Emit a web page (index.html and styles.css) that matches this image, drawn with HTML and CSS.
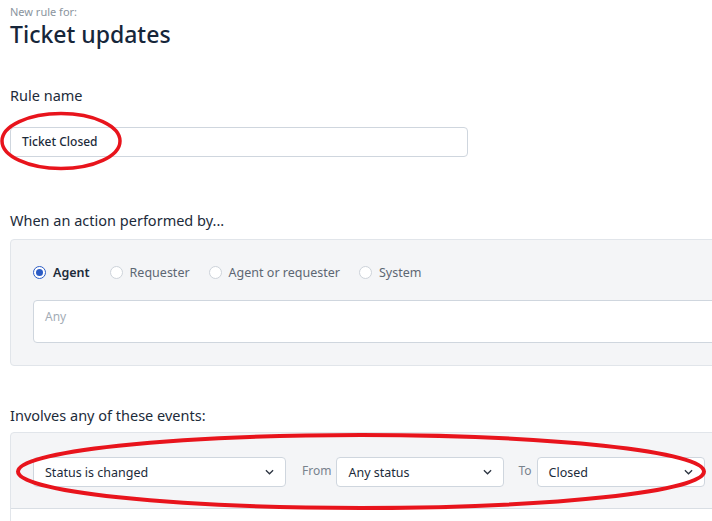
FILE: index.html
```html
<!DOCTYPE html>
<html lang="en">
<head>
<meta charset="utf-8">
<title>New rule</title>
<link rel="stylesheet" href="styles.css">
</head>
<body>
<div class="page">
  <div class="eyebrow">New rule for:</div>
  <h1 class="title">Ticket updates</h1>

  <div class="field-label first">Rule name</div>
  <div class="text-input">Ticket Closed</div>

  <div class="field-label section">When an action performed by...</div>
  <div class="panel panel-actor">
    <div class="radios">
      <label class="radio checked"><span class="dot"></span><span class="rtext">Agent</span></label>
      <label class="radio"><span class="dot"></span><span class="rtext">Requester</span></label>
      <label class="radio"><span class="dot"></span><span class="rtext">Agent or requester</span></label>
      <label class="radio"><span class="dot"></span><span class="rtext">System</span></label>
    </div>
    <div class="any-input">Any</div>
  </div>

  <div class="field-label section2">Involves any of these events:</div>
  <div class="panel panel-events">
    <div class="event-row">
      <div class="select s1"><span>Status is changed</span><svg class="chev" viewBox="0 0 10 6" width="9" height="6"><path d="M1 1l4 4 4-4" fill="none" stroke="#2b3340" stroke-width="1.4"/></svg></div>
      <span class="inline-label from">From</span>
      <div class="select s2"><span>Any status</span><svg class="chev" viewBox="0 0 10 6" width="9" height="6"><path d="M1 1l4 4 4-4" fill="none" stroke="#2b3340" stroke-width="1.4"/></svg></div>
      <span class="inline-label to">To</span>
      <div class="select s3"><span>Closed</span><svg class="chev" viewBox="0 0 10 6" width="9" height="6"><path d="M1 1l4 4 4-4" fill="none" stroke="#2b3340" stroke-width="1.4"/></svg></div>
    </div>
    <div class="panel-foot"></div>
  </div>
</div>

<svg class="annotations" width="712" height="521" viewBox="0 0 712 521">
  <ellipse cx="61" cy="141" rx="59" ry="27.5" fill="none" stroke="#e8141c" stroke-width="3.5"/>
  <ellipse cx="361" cy="471.5" rx="343" ry="36.5" fill="none" stroke="#e8141c" stroke-width="4"/>
</svg>
</body>
</html>
```

FILE: styles.css
```css
html, body {
  margin: 0;
  padding: 0;
  background: #ffffff;
  overflow: hidden;
}

body {
  width: 712px;
  height: 521px;
  position: relative;
  font-family: "Noto Sans", "Open Sans", "DejaVu Sans", sans-serif;
  color: #1c2b3a;
}

.page {
  padding-left: 10px;
  width: 702px;
  overflow: hidden;
}

.eyebrow {
  font-size: 11px;
  line-height: 14px;
  color: #8a949e;
  padding-top: 5px;
}

.title {
  margin: 0;
  font-size: 23px;
  font-weight: 500;
  line-height: 30px;
  color: #16263a;
}

.field-label {
  font-size: 14.5px;
  line-height: 20px;
  font-weight: 400;
  color: #1c2b3a;
}

.field-label.first {
  margin-top: 36px;
}

.text-input {
  margin-top: 22px;
  height: 28px;
  border: 1px solid #cfd6de;
  border-radius: 4px;
  box-sizing: content-box;
  font-size: 12px;
  font-weight: 500;
  line-height: 28px;
  padding-left: 11px;
  width: 445px;
  color: #1c2b3a;
}

.field-label.section {
  margin-top: 53px;
}

.panel {
  background: #f4f5f7;
  border: 1px solid #e1e5ea;
  border-radius: 4px;
  width: 740px;
  box-sizing: border-box;
}

.panel-actor {
  margin-top: 9px;
  padding: 23px 0 22px 22px;
}

.radios {
  display: flex;
  align-items: center;
  height: 18px;
}

.radio {
  display: flex;
  align-items: center;
  margin-right: 19px;
  font-size: 12.5px;
  color: #5d6773;
}

.radio .dot {
  width: 11px;
  height: 11px;
  border-radius: 50%;
  border: 1px solid #cdd3da;
  background: #ffffff;
  margin-right: 7px;
  position: relative;
  box-sizing: content-box;
}

.radio.checked {
  color: #1c2b3a;
  font-weight: 600;
  margin-right: 20px;
}

.radio.checked .dot {
  border-color: #2c5cc5;
}

.radio.checked .dot::after {
  content: "";
  position: absolute;
  left: 2px;
  top: 2px;
  width: 7px;
  height: 7px;
  border-radius: 50%;
  background: #2c5cc5;
}

.any-input {
  margin-top: 19px;
  background: #ffffff;
  border: 1px solid #cfd6de;
  border-radius: 4px;
  font-size: 12px;
  color: #a3acb6;
  padding: 7px 11px 0;
  box-sizing: border-box;
  height: 43px;
}

.field-label.section2 {
  margin-top: 39px;
}

.panel-events {
  margin-top: 7px;
  padding: 0;
  overflow: hidden;
}

.event-row {
  display: flex;
  align-items: center;
  padding: 24px 0 21px 22px;
}

.select {
  display: flex;
  align-items: center;
  justify-content: space-between;
  height: 30px;
  box-sizing: border-box;
  background: #ffffff;
  border: 1px solid #cfd6de;
  border-radius: 4px;
  padding: 0 11px;
  font-size: 12.5px;
  color: #1c2b3a;
}

.select.s1 { width: 253px; }
.select.s2 { width: 168px; }
.select.s3 { width: 168px; }

.inline-label {
  font-size: 12px;
  color: #78828d;
}

.inline-label.from {
  margin: -3px 5px 0 16px;
}

.inline-label.to {
  margin: -3px 5px 0 14px;
}

.panel-foot {
  height: 20px;
  background: #ffffff;
  border-top: 1px solid #d9dee4;
}

.annotations {
  position: absolute;
  left: 0;
  top: 0;
  pointer-events: none;
}
```
